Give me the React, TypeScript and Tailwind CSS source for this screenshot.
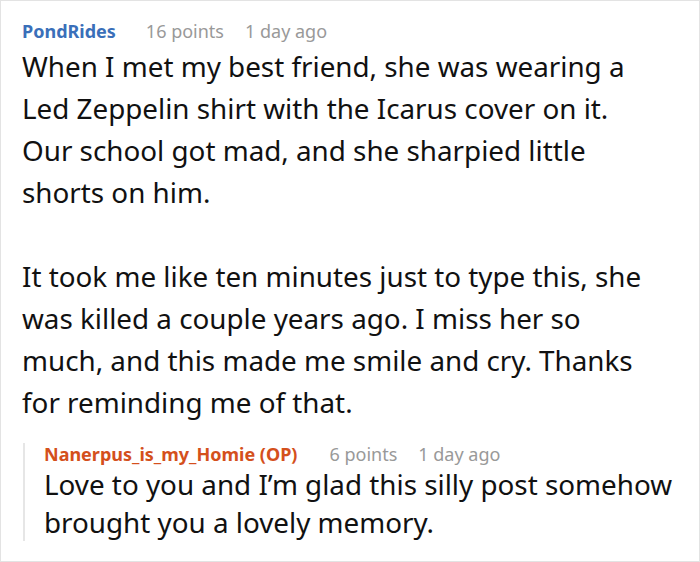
import React from 'react';

const comment = {
    author: 'PondRides',
    points: '16 points',
    time: '1 day ago',
    paragraphs: [
        'When I met my best friend, she was wearing a Led Zeppelin shirt with the Icarus cover on it. Our school got mad, and she sharpied little shorts on him.',
        'It took me like ten minutes just to type this, she was killed a couple years ago. I miss her so much, and this made me smile and cry. Thanks for reminding me of that.',
    ],
};

const reply = {
    author: 'Nanerpus_is_my_Homie (OP)',
    points: '6 points',
    time: '1 day ago',
    text: 'Love to you and I’m glad this silly post somehow brought you a lovely memory.',
};

export default function App() {
    return (
        <div className="w-[700px] h-[562px] bg-white border border-[#e3e3e3] overflow-hidden font-['Noto_Sans',sans-serif] text-[#111]">
            <div className="pl-[21px] pr-[14px] pt-[14px]">
                {/* Comment header */}
                <div className="flex items-baseline text-[18px] leading-[32px]">
                    <span className="font-bold text-[#3a6fb9]">{comment.author}</span>
                    <span className="ml-[30px] text-[#999]">{comment.points}</span>
                    <span className="ml-[21px] text-[#999]">{comment.time}</span>
                </div>

                <div className="pr-[24px] text-[27.8px] leading-[42px] space-y-[42px] -mt-[2px]">
                    {comment.paragraphs.map((p, i) => (
                        <p key={i}>{p}</p>
                    ))}
                </div>

                {/* Reply */}
                <div className="mt-[20px] ml-[1px] pl-[19px] border-l-2 border-[#e6e6e6]">
                    <div className="flex items-baseline text-[18px] leading-[22px]">
                        <span className="font-bold text-[#d4501c]">{reply.author}</span>
                        <span className="ml-[32px] text-[#999]">{reply.points}</span>
                        <span className="ml-[21px] text-[#999]">{reply.time}</span>
                    </div>
                    <p className="text-[27.8px] leading-[38px]">{reply.text}</p>
                </div>
            </div>
        </div>
    );
}
